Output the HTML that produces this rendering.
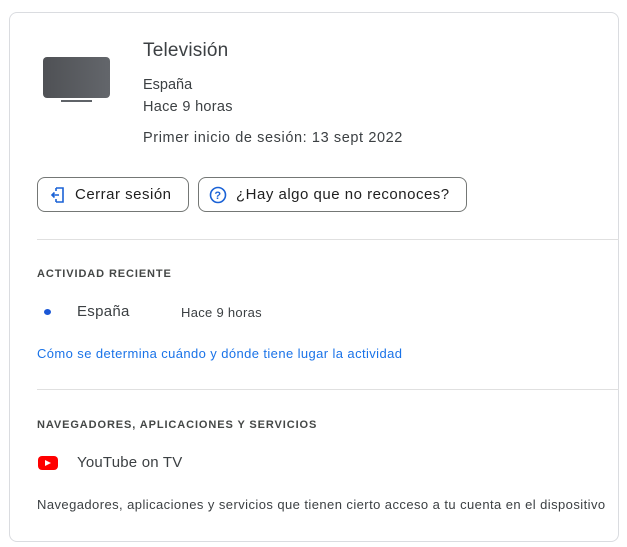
<!DOCTYPE html>
<html><head><meta charset="utf-8"><style>
*{margin:0;padding:0;box-sizing:border-box}
body{width:627px;height:547px;background:#fff;font-family:"Liberation Sans",Roboto,sans-serif;color:#3c4043;position:relative;overflow:hidden}
.card{position:absolute;left:9px;top:12px;width:610px;height:530px;border:1px solid #dadce0;border-radius:8px}
.a{position:absolute;white-space:nowrap}
.btn{position:absolute;top:177px;height:35px;border:1px solid #747775;border-radius:8px;font-size:15px;color:#1f1f1f;line-height:33px;letter-spacing:0.5px}
.hr{position:absolute;left:37px;right:8px;height:1px;background:#e0e0e0}
.h{font-size:11px;letter-spacing:0.5px;font-weight:bold;color:#444746}
</style></head><body>
<div class="card"></div>
<div class="a" style="left:43px;top:57px;width:67px;height:41px;border-radius:4px;background:linear-gradient(90deg,#4f5155,#63666b)"></div>
<div class="a" style="left:61px;top:100px;width:31px;height:2px;background:#5f6368"></div>
<div class="a" style="left:143px;top:40px;font-size:19px;color:#3c4043;letter-spacing:0.2px">Televisión</div>
<div class="a" style="left:143px;top:77px;font-size:14.5px">España</div>
<div class="a" style="left:143px;top:99px;font-size:14.5px;letter-spacing:0.3px">Hace 9 horas</div>
<div class="a" style="left:143px;top:130px;font-size:14.5px;letter-spacing:0.6px">Primer inicio de sesión: 13 sept 2022</div>
<div class="btn" style="left:37px;width:152px">
<svg style="position:absolute;left:12px;top:8px" width="16" height="18" viewBox="0 0 16 18"><path d="M6 2h7v14H6M6 2v3M6 16v-3" fill="none" stroke="#1a62d6" stroke-width="1.6"/><path d="M9 9H2M4.5 6.5L2 9l2.5 2.5" fill="none" stroke="#1a62d6" stroke-width="1.6"/></svg>
<span style="position:absolute;left:37px">Cerrar sesión</span></div>
<div class="btn" style="left:198px;width:269px">
<svg style="position:absolute;left:10px;top:8px" width="18" height="18" viewBox="0 0 18 18"><circle cx="9" cy="9" r="7.5" fill="none" stroke="#1a62d6" stroke-width="1.6"/><text x="9" y="13" font-size="11" font-weight="bold" text-anchor="middle" fill="#1a62d6" font-family="Liberation Sans">?</text></svg>
<span style="position:absolute;left:37px">¿Hay algo que no reconoces?</span></div>
<div class="hr" style="top:239px"></div>
<div class="a h" style="left:37px;top:268px;letter-spacing:0.9px">ACTIVIDAD RECIENTE</div>
<div class="a" style="left:44px;top:309px;width:7px;height:6px;border-radius:50%;background:#1a57d6"></div>
<div class="a" style="left:77px;top:303px;font-size:15px;letter-spacing:0.3px">España</div>
<div class="a" style="left:181px;top:305px;font-size:13px;letter-spacing:0.3px">Hace 9 horas</div>
<div class="a" style="left:37px;top:346px;font-size:13px;color:#1a73e8;letter-spacing:0.4px">Cómo se determina cuándo y dónde tiene lugar la actividad</div>
<div class="hr" style="top:389px"></div>
<div class="a h" style="left:37px;top:419px;letter-spacing:0.9px">NAVEGADORES, APLICACIONES Y SERVICIOS</div>
<div class="a" style="left:38px;top:456px;width:20px;height:14px;border-radius:4px;background:#f00"></div>
<svg class="a" style="left:45px;top:460px" width="6" height="6" viewBox="0 0 6 6"><path d="M0 0L6 3L0 6Z" fill="#fff"/></svg>
<div class="a" style="left:77px;top:454px;font-size:15px;letter-spacing:0.2px">YouTube on TV</div>
<div class="a" style="left:37px;top:497px;font-size:13px;color:#3c4043;letter-spacing:0.43px">Navegadores, aplicaciones y servicios que tienen cierto acceso a tu cuenta en el dispositivo</div>
</body></html>
